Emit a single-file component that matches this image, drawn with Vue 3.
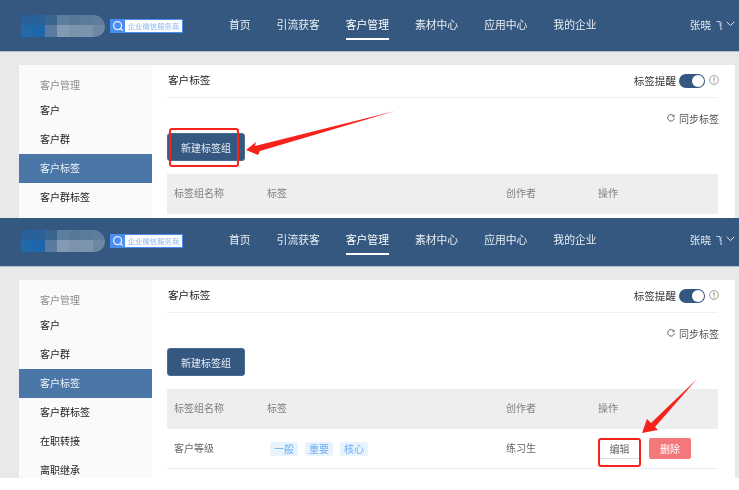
<script setup>
const navItems = ['首页', '引流获客', '客户管理', '素材中心', '应用中心', '我的企业']
const sideItems = ['客户', '客户群', '客户标签', '客户群标签', '在职转接', '离职继承']
const shots = [
  { id: 'first', withRow: false, sideCount: 4 },
  { id: 'second', withRow: true, sideCount: 6 },
]
const logoCells = [
  '#27609a', '#2a619a', '#3b6591', '#5f7e9f', '#597998', '#5d7b9b', '#5f7d9c',
  '#2169a8', '#1d66ab', '#5a7b9f', '#8499b2', '#7c93ae', '#7d94ae', '#6e88a4',
]
const tags = ['一般', '重要', '核心']
</script>

<template>
  <div class="page">
    <section v-for="shot in shots" :key="shot.id" class="shot" :class="shot.id">
      <div class="inner">
        <header class="topbar">
          <div class="logo">
            <span v-for="(c, i) in logoCells" :key="i" :style="{ background: c }"></span>
          </div>
          <div class="badge">
            <span class="badge-icon">
              <svg width="12" height="12" viewBox="0 0 12 12" fill="none">
                <circle cx="5.6" cy="5.6" r="4" stroke="#fff" stroke-width="1.3" opacity=".85" />
                <path d="M8.4 8.6l2 1.6" stroke="#fff" stroke-width="1.3" stroke-linecap="round" opacity=".85" />
              </svg>
            </span>
            <span class="badge-text">企业微信服务商</span>
          </div>
          <nav class="nav">
            <a v-for="item in navItems" :key="item" class="nav-item" :class="{ on: item === '客户管理' }">{{ item }}</a>
          </nav>
          <div class="user">
            <span class="name">张晓 <i>飞</i></span>
            <svg width="9" height="6" viewBox="0 0 9 6" fill="none">
              <path d="M.7 .8l3.8 3.8L8.3 .8" stroke="#dfe6ee" stroke-width="1" />
            </svg>
          </div>
        </header>
        <main class="main">
          <div class="card">
            <aside class="side">
              <div class="side-label">客户管理</div>
              <div v-for="item in sideItems.slice(0, shot.sideCount)" :key="item" class="side-item" :class="{ on: item === '客户标签' }">{{ item }}</div>
            </aside>
            <div class="content">
              <div class="title-row">
                <h1>客户标签</h1>
                <div class="remind">
                  <span class="remind-label">标签提醒</span>
                  <span class="toggle"><i></i></span>
                  <svg class="info" width="10" height="10" viewBox="0 0 10 10" fill="none">
                    <circle cx="5" cy="5" r="4.4" stroke="#888" stroke-width=".8" />
                    <path d="M5 2.4v3.2M5 6.7v1" stroke="#777" stroke-width="1" />
                  </svg>
                </div>
              </div>
              <div class="sync-row">
                <svg width="8" height="8" viewBox="0 0 8 8" fill="none">
                  <path d="M6.9 2.2A3.3 3.3 0 1 0 7.3 4.2" stroke="#555" stroke-width=".9" />
                  <path d="M7.2 .8v1.9H5.3" stroke="#555" stroke-width=".7" />
                </svg>
                <span>同步标签</span>
              </div>
              <button class="primary">新建标签组</button>
              <div class="table">
                <div class="tr head">
                  <span class="c1">标签组名称</span>
                  <span class="c2">标签</span>
                  <span class="c3">创作者</span>
                  <span class="c4">操作</span>
                </div>
                <div v-if="shot.withRow" class="tr body">
                  <span class="c1">客户等级</span>
                  <span class="c2 tags">
                    <em v-for="t in tags" :key="t" class="tag">{{ t }}</em>
                  </span>
                  <span class="c3">练习生</span>
                  <span class="c4 ops">
                    <span class="edit">编辑</span>
                    <span class="del">删除</span>
                  </span>
                </div>
              </div>
            </div>
          </div>
        </main>
      </div>
    </section>

    <div class="mark mark-a"></div>
    <div class="mark mark-b"></div>
    <svg class="arrows" width="739" height="490" viewBox="0 0 739 490">
      <polygon points="246,150 256,142 255,146 395,111 260,151 258,155" fill="#f8221c" />
      <polygon points="642,433 647,419 651,423 697,379 655,427 658,430" fill="#f8221c" />
    </svg>
  </div>
</template>

<style>
html, body { margin: 0; background: #fff; }
</style>

<style scoped>
.page {
  position: relative;
  width: 739px;
  height: 490px;
  overflow: hidden;
  background: #fff;
  font-family: "Noto Sans CJK SC", "Liberation Sans", sans-serif;
  font-size: 10px;
  color: #333;
}
.shot { overflow: hidden; filter: blur(0.3px); }
.shot.first { height: 218px; }
.shot.second { height: 260px; }
.shot.second .inner { margin-top: -3px; }
.inner { background: #e8e9eb; min-height: 300px; }

.topbar {
  height: 51px;
  border-bottom: 1px solid #b4bfcc;
  background: #34587f;
  display: flex;
  align-items: center;
  color: #e9eef4;
  box-sizing: content-box;
}
.logo {
  margin-left: 21px;
  width: 84px;
  height: 22px;
  display: grid;
  grid-template-columns: repeat(7, 12px);
  grid-template-rows: 10px 12px;
  border-radius: 0 13px 11px 0;
  overflow: hidden;
  flex: none;
}
.badge {
  margin-left: 5px;
  width: 73px;
  height: 14px;
  display: flex;
  background: #4a8ef2;
  box-sizing: border-box;
  padding: 1px;
  flex: none;
}
.badge-icon { width: 14px; display: flex; align-items: center; justify-content: center; }
.badge-text {
  flex: 1;
  background: #fff;
  color: #8cb5ee;
  font-size: 7.4px;
  line-height: 12px;
  text-align: center;
  white-space: nowrap;
}
.nav { margin-left: 46px; display: flex; gap: 26px; height: 100%; align-items: center; }
.nav-item {
  position: relative;
  font-size: 10.8px;
  white-space: nowrap;
  line-height: 16px;
  padding-bottom: 3px;
}
.nav-item.on { color: #fff; }
.nav-item.on::after {
  content: "";
  position: absolute;
  left: 0;
  right: 0;
  bottom: -5px;
  height: 2px;
  background: #fff;
}
.user {
  margin-left: auto;
  margin-right: 4px;
  display: flex;
  align-items: center;
  gap: 6px;
  font-size: 10.6px;
  white-space: nowrap;
  padding-bottom: 3px;
}
.name i {
  display: inline-block;
  font-style: normal;
  margin-left: 3px;
  margin-right: -7px;
  transform: scaleX(.6);
  transform-origin: left center;
}

.main { padding: 13px 4px 0 19px; }
.card { display: flex; background: #fff; min-height: 420px; border-radius: 2px; overflow: hidden; }
.side { width: 133px; flex: none; background: #f9fafc; padding-top: 12px; box-sizing: border-box; }
.side-label { height: 19px; line-height: 16px; padding-left: 21px; color: #8a8a8a; }
.side-item { height: 29px; line-height: 27px; padding-left: 21px; color: #222; }
.side-item.on { background: #4a76a8; color: #eef3f8; }

.content { flex: 1; padding: 0 17px 0 15px; min-width: 0; }
.title-row {
  height: 32px;
  box-sizing: content-box;
  border-bottom: 1px solid #eeeff2;
  display: flex;
  align-items: center;
  justify-content: space-between;
  padding-left: 1px;
}
h1 { margin: -2px 0 0; font-size: 10.6px; font-weight: 400; color: #222; line-height: 30px; }
.remind { display: flex; align-items: center; gap: 3px; font-size: 10.6px; color: #333; margin-right: -1px; }
.remind-label, .info { margin-bottom: 2px; }
.toggle {
  width: 26px;
  height: 14px;
  border-radius: 7px;
  background: #34587f;
  position: relative;
  margin-right: 1px;
}
.toggle i {
  position: absolute;
  right: 1px;
  top: 1px;
  width: 12px;
  height: 12px;
  border-radius: 50%;
  background: #fff;
}
.sync-row {
  height: 20px;
  margin-top: 10px;
  display: flex;
  justify-content: flex-end;
  align-items: center;
  gap: 4px;
  color: #555;
  margin-right: -1px;
}
.primary {
  display: block;
  margin-top: 5px;
  width: 78px;
  height: 28px;
  padding: 0;
  border: 1px solid #4a6b90;
  border-radius: 3px;
  background: #34587f;
  color: #e6ecf2;
  font: inherit;
}
.table { margin-top: 13px; }
.tr { display: flex; align-items: center; color: #666; }
.tr.head { height: 40px; background: #eeeeee; color: #808080; }
.tr.head span { margin-top: -3px; }
.tr.body { height: 39px; border-bottom: 1px solid #eaedf3; }
.tr.body .c1, .tr.body .c3 { margin-top: -2px; }
.c1 { width: 100px; padding-left: 7px; box-sizing: border-box; flex: none; }
.c2 { width: 239px; flex: none; }
.c3 { width: 92px; flex: none; }
.c4 { flex: 1; }
.tags { display: flex; gap: 7px; padding-left: 3px; box-sizing: border-box; }
.tag {
  width: 28px;
  height: 14px;
  line-height: 13px;
  text-align: center;
  font-style: normal;
  color: #6aaef5;
  background: #e8f3fe;
  border-radius: 3px;
}
.ops { display: flex; gap: 9px; align-items: flex-start; margin-top: -1px; }
.edit {
  width: 41px;
  height: 20px;
  line-height: 21px;
  text-align: center;
  border-bottom: 1px solid #dcdce4;
  color: #666;
  margin-left: 1px;
}
.del {
  width: 42px;
  height: 21px;
  line-height: 21px;
  text-align: center;
  background: #f4777b;
  color: #fff;
  border-radius: 2px;
}

.mark { position: absolute; border: 2px solid #f8221c; border-radius: 3px; box-sizing: border-box; }
.mark-a { left: 169px; top: 128px; width: 70px; height: 39px; }
.mark-b { left: 598px; top: 438px; width: 43px; height: 29px; }
.arrows { position: absolute; left: 0; top: 0; pointer-events: none; filter: blur(0.3px); }
</style>
